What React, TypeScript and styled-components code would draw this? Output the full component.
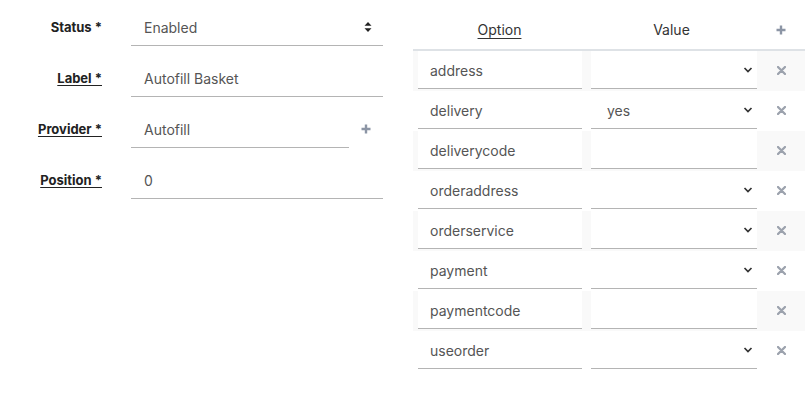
import styled, { createGlobalStyle } from "styled-components";

const GlobalStyle = createGlobalStyle`
  body {
    margin: 0;
    background: #fff;
    font-family: Inter, "Liberation Sans", sans-serif;
    color: #333;
  }
`;

const Page = styled.div`
  display: flex;
  width: 811px;
  height: 404px;
`;

const FormPanel = styled.div`
  width: 413px;
  padding-top: 8px;
  display: flex;
  flex-direction: column;
  gap: 13px;
`;

const FormRow = styled.div`
  display: grid;
  grid-template-columns: 102px 252px;
  column-gap: 29px;
  align-items: center;
  height: 38px;
`;

const Label = styled.label<{ $link?: boolean }>`
  text-align: right;
  font-size: 13px;
  font-weight: 700;
  color: #222;
  text-decoration: ${(p) => (p.$link ? "underline" : "none")};
  text-underline-offset: 2px;
`;

const Field = styled.div`
  position: relative;
  display: flex;
  align-items: center;
  height: 38px;
  box-sizing: border-box;
  padding: 1px 13px 0;
  border-bottom: 1px solid #b4b4b4;
  font-size: 14px;
  color: #555;
  background: #fff;
`;

const FieldWithAction = styled.div`
  display: grid;
  grid-template-columns: 218px 34px;
  align-items: center;
`;

const IconButton = styled.span`
  display: flex;
  justify-content: center;
  align-items: center;
  height: 38px;
`;

const SelectArrows = styled.svg`
  position: absolute;
  right: 11px;
  top: 50%;
  transform: translateY(-50%);
`;

const Chevron = styled.svg`
  position: absolute;
  right: 4px;
  top: 50%;
  transform: translateY(-50%);
`;

const Table = styled.div`
  width: 392px;
  padding-top: 10px;
`;

const HeadRow = styled.div`
  display: grid;
  grid-template-columns: 173px 171px 48px;
  align-items: center;
  height: 39px;
  border-bottom: 2px solid #dee2e6;
`;

const HeadCell = styled.div<{ $link?: boolean }>`
  text-align: center;
  font-size: 14px;
  color: #333;
  text-decoration: ${(p) => (p.$link ? "underline" : "none")};
  text-underline-offset: 3px;
`;

const BodyRow = styled.div<{ $striped: boolean }>`
  display: grid;
  grid-template-columns: 173px 166px 48px;
  padding-left: 5px;
  height: 40px;
  background: ${(p) => (p.$striped ? "#f9f9f9" : "#fff")};
`;

const OptionField = styled(Field)`
  padding-left: 12px;
  margin-right: 9px;
`;

const ValueField = styled(Field)`
  padding-left: 16px;
`;

type Opt = { name: string; value: string; select: boolean };

const options: Opt[] = [
  { name: "address", value: "", select: true },
  { name: "delivery", value: "yes", select: true },
  { name: "deliverycode", value: "", select: false },
  { name: "orderaddress", value: "", select: true },
  { name: "orderservice", value: "", select: true },
  { name: "payment", value: "", select: true },
  { name: "paymentcode", value: "", select: false },
  { name: "useorder", value: "", select: true },
];

function ChevronDown() {
  return (
    <Chevron width="10" height="7" viewBox="0 0 10 7">
      <path d="M1.5 1.5 L5 5 L8.5 1.5" fill="none" stroke="#333" strokeWidth="1.7" />
    </Chevron>
  );
}

function PlusIcon() {
  return (
    <svg width="10" height="10" viewBox="0 0 10 10">
      <path d="M5 0.5 V9.5 M0.5 5 H9.5" stroke="#8c95a5" strokeWidth="2.4" />
    </svg>
  );
}

function RemoveIcon() {
  return (
    <svg width="9" height="9" viewBox="0 0 9 9">
      <path d="M1 1 L8 8 M8 1 L1 8" stroke="#9ca2ad" strokeWidth="2.3" strokeLinecap="round" />
    </svg>
  );
}

export default function App() {
  return (
    <>
      <GlobalStyle />
      <Page>
        <FormPanel>
          <FormRow>
            <Label>Status *</Label>
            <Field>
              Enabled
              <SelectArrows width="8" height="11" viewBox="0 0 8 11">
                <path d="M4 0.5 L7.5 4.3 H0.5 Z M4 10.5 L7.5 6.7 H0.5 Z" fill="#222" />
              </SelectArrows>
            </Field>
          </FormRow>
          <FormRow>
            <Label $link>Label *</Label>
            <Field>Autofill Basket</Field>
          </FormRow>
          <FormRow>
            <Label $link>Provider *</Label>
            <FieldWithAction>
              <Field>Autofill</Field>
              <IconButton>
                <PlusIcon />
              </IconButton>
            </FieldWithAction>
          </FormRow>
          <FormRow>
            <Label $link>Position *</Label>
            <Field>0</Field>
          </FormRow>
        </FormPanel>

        <Table>
          <HeadRow>
            <HeadCell $link>Option</HeadCell>
            <HeadCell>Value</HeadCell>
            <IconButton>
              <PlusIcon />
            </IconButton>
          </HeadRow>
          {options.map((o, i) => (
            <BodyRow key={o.name} $striped={i % 2 === 0}>
              <OptionField>{o.name}</OptionField>
              <ValueField>
                {o.value}
                {o.select && <ChevronDown />}
              </ValueField>
              <IconButton>
                <RemoveIcon />
              </IconButton>
            </BodyRow>
          ))}
        </Table>
      </Page>
    </>
  );
}
